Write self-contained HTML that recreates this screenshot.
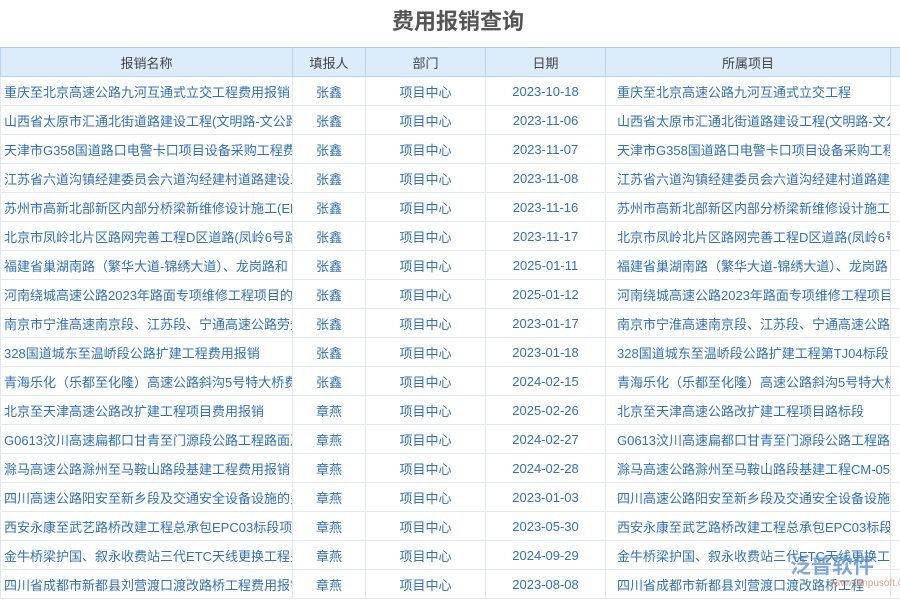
<!DOCTYPE html>
<html><head><meta charset="utf-8"><style>
body{margin:0;width:900px;height:600px;overflow:hidden;background:#fff;font-family:"Liberation Sans","Noto Sans CJK SC",sans-serif;}
h1{margin:0;height:47px;line-height:44px;text-align:center;font-size:22px;color:#555;font-weight:bold;padding-left:16px;}
table{border-collapse:collapse;table-layout:fixed;width:900px;position:absolute;top:47px;left:0;}
td,th{height:28px;border:1px solid #e3e8ee;font-size:13px;white-space:nowrap;overflow:hidden;padding:0;font-weight:normal;}
th{background:#dcecfa;color:#444;border-color:#b9d3ea;border-top:1px solid #a9c8e4;height:28px;}
td{color:#2f72b8;text-align:center;}
td.l{text-align:left;padding-left:3px;}
td.p{text-align:left;padding-left:11px;}
.wm{position:absolute;left:790px;top:550px;font-size:21px;color:#4a86cf;font-weight:bold;opacity:.7;}
.wm2{position:absolute;left:830px;top:578px;font-size:10px;color:#e07a52;opacity:.7;}
</style></head><body>
<h1>费用报销查询</h1>
<table>
<colgroup><col style="width:292px"><col style="width:73px"><col style="width:120px"><col style="width:120px"><col style="width:285px"><col style="width:10px"></colgroup>
<tr><th>报销名称</th><th>填报人</th><th>部门</th><th>日期</th><th>所属项目</th><th></th></tr>
<tr><td class="l">重庆至北京高速公路九河互通式立交工程费用报销</td><td>张鑫</td><td>项目中心</td><td>2023-10-18</td><td class="p">重庆至北京高速公路九河互通式立交工程</td><td></td></tr>
<tr><td class="l">山西省太原市汇通北街道路建设工程(文明路-文公路</td><td>张鑫</td><td>项目中心</td><td>2023-11-06</td><td class="p">山西省太原市汇通北街道路建设工程(文明路-文公</td><td></td></tr>
<tr><td class="l">天津市G358国道路口电警卡口项目设备采购工程费用</td><td>张鑫</td><td>项目中心</td><td>2023-11-07</td><td class="p">天津市G358国道路口电警卡口项目设备采购工程</td><td></td></tr>
<tr><td class="l">江苏省六道沟镇经建委员会六道沟经建村道路建设工</td><td>张鑫</td><td>项目中心</td><td>2023-11-08</td><td class="p">江苏省六道沟镇经建委员会六道沟经建村道路建</td><td></td></tr>
<tr><td class="l">苏州市高新北部新区内部分桥梁新维修设计施工(EPC</td><td>张鑫</td><td>项目中心</td><td>2023-11-16</td><td class="p">苏州市高新北部新区内部分桥梁新维修设计施工</td><td></td></tr>
<tr><td class="l">北京市凤岭北片区路网完善工程D区道路(凤岭6号路</td><td>张鑫</td><td>项目中心</td><td>2023-11-17</td><td class="p">北京市凤岭北片区路网完善工程D区道路(凤岭6号</td><td></td></tr>
<tr><td class="l">福建省巢湖南路（繁华大道-锦绣大道）、龙岗路和</td><td>张鑫</td><td>项目中心</td><td>2025-01-11</td><td class="p">福建省巢湖南路（繁华大道-锦绣大道）、龙岗路</td><td></td></tr>
<tr><td class="l">河南绕城高速公路2023年路面专项维修工程项目的费</td><td>张鑫</td><td>项目中心</td><td>2025-01-12</td><td class="p">河南绕城高速公路2023年路面专项维修工程项目</td><td></td></tr>
<tr><td class="l">南京市宁淮高速南京段、江苏段、宁通高速公路劳务</td><td>张鑫</td><td>项目中心</td><td>2023-01-17</td><td class="p">南京市宁淮高速南京段、江苏段、宁通高速公路</td><td></td></tr>
<tr><td class="l">328国道城东至温峤段公路扩建工程费用报销</td><td>张鑫</td><td>项目中心</td><td>2023-01-18</td><td class="p">328国道城东至温峤段公路扩建工程第TJ04标段</td><td></td></tr>
<tr><td class="l">青海乐化（乐都至化隆）高速公路斜沟5号特大桥费用</td><td>张鑫</td><td>项目中心</td><td>2024-02-15</td><td class="p">青海乐化（乐都至化隆）高速公路斜沟5号特大桥</td><td></td></tr>
<tr><td class="l">北京至天津高速公路改扩建工程项目费用报销</td><td>章燕</td><td>项目中心</td><td>2025-02-26</td><td class="p">北京至天津高速公路改扩建工程项目路标段</td><td></td></tr>
<tr><td class="l">G0613汶川高速扁都口甘青至门源段公路工程路面及</td><td>章燕</td><td>项目中心</td><td>2024-02-27</td><td class="p">G0613汶川高速扁都口甘青至门源段公路工程路</td><td></td></tr>
<tr><td class="l">滁马高速公路滁州至马鞍山路段基建工程费用报销</td><td>章燕</td><td>项目中心</td><td>2024-02-28</td><td class="p">滁马高速公路滁州至马鞍山路段基建工程CM-05</td><td></td></tr>
<tr><td class="l">四川高速公路阳安至新乡段及交通安全设备设施的费</td><td>章燕</td><td>项目中心</td><td>2023-01-03</td><td class="p">四川高速公路阳安至新乡段及交通安全设备设施</td><td></td></tr>
<tr><td class="l">西安永康至武艺路桥改建工程总承包EPC03标段项目</td><td>章燕</td><td>项目中心</td><td>2023-05-30</td><td class="p">西安永康至武艺路桥改建工程总承包EPC03标段</td><td></td></tr>
<tr><td class="l">金牛桥梁护国、叙永收费站三代ETC天线更换工程费用</td><td>章燕</td><td>项目中心</td><td>2024-09-29</td><td class="p">金牛桥梁护国、叙永收费站三代ETC天线更换工程</td><td></td></tr>
<tr><td class="l">四川省成都市新都县刘营渡口渡改路桥工程费用报销</td><td>章燕</td><td>项目中心</td><td>2023-08-08</td><td class="p">四川省成都市新都县刘营渡口渡改路桥工程</td><td></td></tr>
</table>
<div class="wm">泛普软件</div>
<div class="wm2">www.fanpusoft.com</div>
</body></html>
